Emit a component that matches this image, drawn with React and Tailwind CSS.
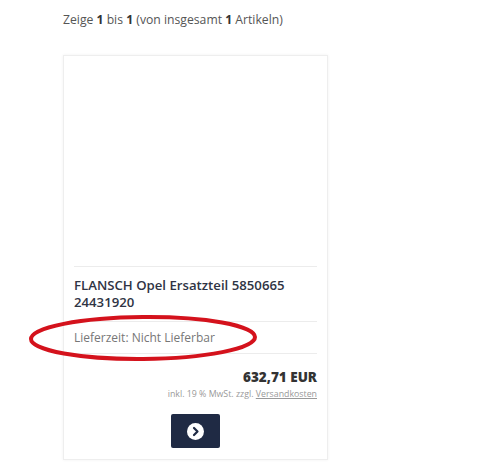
export default function App() {
  const font = { fontFamily: '"Open Sans", "Liberation Sans", sans-serif' };
  return (
    <div className="relative w-[500px] h-[475px] bg-white overflow-hidden" style={font}>
      <div className="pl-[63px] pt-[11px] text-[12.2px] leading-[18px] text-[#555]">
        Zeige <b className="text-[#333]">1</b> bis <b className="text-[#333]">1</b> (von insgesamt <b className="text-[#333]">1</b> Artikeln)
      </div>
      <div className="ml-[63px] mt-[26px] w-[265px] h-[405px] border border-[#eeeeee] shadow-[0_0_3px_rgba(0,0,0,0.06)] flex flex-col px-[10px]">
        <div className="h-[210px] shrink-0" />
        <div className="border-t border-[#ececec] pt-[10px] pb-[10px] text-[13.2px] leading-[17px] font-semibold text-[#2f3444]">
          FLANSCH Opel Ersatzteil 5850665
          <br />
          24431920
        </div>
        <div className="border-t border-[#ececec] h-[32px] flex items-center text-[12px] text-[#777]">
          Lieferzeit: Nicht Lieferbar
        </div>
        <div className="border-t border-[#ececec] pt-[14px] flex flex-col items-end">
          <div className="text-[13.5px] leading-[18px] font-extrabold text-[#333]">632,71 EUR</div>
          <div className="text-[8.8px] leading-[12px] text-[#999] mt-[2px]">
            inkl. 19 % MwSt. zzgl. <span className="underline">Versandkosten</span>
          </div>
        </div>
        <div className="flex justify-center mt-[14px]">
          <div className="w-[49px] h-[34px] rounded-[2px] bg-[#1f2a44] flex items-center justify-center">
            <svg width="17" height="17" viewBox="0 0 17 17">
              <circle cx="8.5" cy="8.5" r="8.5" fill="#fff" />
              <path d="M7 5 L10.5 8.5 L7 12" fill="none" stroke="#1f2a44" strokeWidth="2.2" strokeLinecap="round" strokeLinejoin="round" />
            </svg>
          </div>
        </div>
      </div>
      <svg className="absolute left-0 top-0 pointer-events-none" width="500" height="475">
        <ellipse cx="143" cy="338" rx="112" ry="21" fill="none" stroke="#d4121c" strokeWidth="4" transform="rotate(-0.5 143 338)" />
      </svg>
    </div>
  );
}
